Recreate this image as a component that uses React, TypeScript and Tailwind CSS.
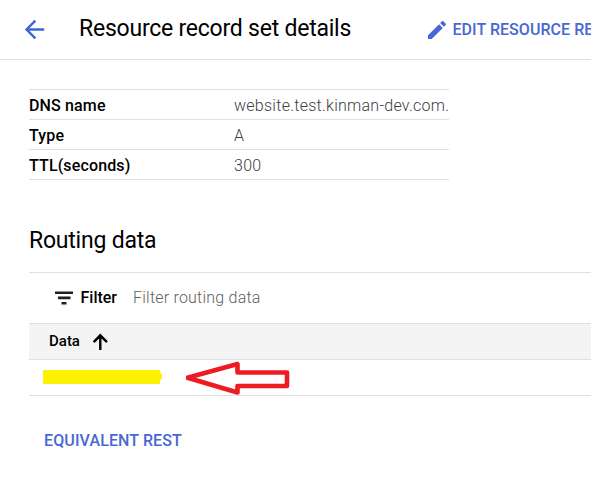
import React from "react";

const records = [
  { label: "DNS name", value: "website.test.kinman-dev.com." },
  { label: "Type", value: "A" },
  { label: "TTL(seconds)", value: "300" },
];

function Header() {
  return (
    <header className="flex h-[60px] items-center border-b border-[#dfdfdf] pl-5 whitespace-nowrap">
      <svg className="size-[29px] shrink-0 fill-[#4065d4]" viewBox="0 0 24 24">
        <path d="M20 11H7.83l5.59-5.59L12 4l-8 8 8 8 1.41-1.41L7.83 13H20v-2z" />
      </svg>
      <h1 className="ml-[30px] w-[346px] shrink-0 pb-px text-[23px] leading-7 tracking-[-0.23px]">Resource record set details</h1>
      <button className="flex shrink-0 items-center text-base font-medium text-[#4768d3]">
        <svg className="size-6 fill-current" viewBox="0 0 24 24">
          <path d="M3 17.25V21h3.75L17.81 9.94l-3.75-3.75L3 17.25zM20.71 7.04a.996.996 0 0 0 0-1.41l-2.34-2.34a.996.996 0 0 0-1.41 0l-1.83 1.83 3.75 3.75 1.83-1.83z" />
        </svg>
        <span className="ml-[3.5px] tracking-[0.05px]">EDIT RESOURCE RECORD SET</span>
      </button>
    </header>
  );
}

export default function App() {
  return (
    <div className="h-[502px] w-[591px] overflow-hidden bg-white font-['Roboto',sans-serif] text-black">
      <Header />
      <main className="pl-[29px]">
        <dl className="mt-[29px] w-[420px] border-t border-[#dfdfdf] text-base">
          {records.map((r) => (
            <div key={r.label} className="flex h-[30px] items-center border-b border-[#dfdfdf] pt-[3px] whitespace-nowrap">
              <dt className="w-[205px] shrink-0 font-medium tracking-[0.14px]">{r.label}</dt>
              <dd className="font-light tracking-[0.26px] text-[#404040]">{r.value}</dd>
            </div>
          ))}
        </dl>
        <h2 className="mt-[47px] text-[23px] leading-7 tracking-[-0.22px]">Routing data</h2>
        <section className="mt-[17px] border-t border-[#dfdfdf]">
          <div className="flex h-[50px] items-center pl-[23px]">
            <svg className="size-6 fill-[#202124]" viewBox="0 0 24 24">
              <path d="M9.5 18.5h5v-2.6h-5zM3 5.4V8h18V5.4zM6 13.2h12.5v-2.6H6z" />
            </svg>
            <span className="ml-[4.5px] font-medium">Filter</span>
            <span className="ml-4 font-light tracking-[0.22px] text-[#606060]">Filter routing data</span>
          </div>
          <div className="flex h-[37px] items-center border-y border-[#dfdfdf] bg-[#f4f4f4] pl-5">
            <span className="text-[15px] font-medium">Data</span>
            <svg className="ml-2 size-6 fill-black" viewBox="0 0 24 24">
              <path d="m4.8 11.2 1.7 1.7 4.6-4.4v11.5h2.4V8.5l4.7 4.4 1.6-1.7L12.3 3.5z" />
            </svg>
          </div>
          <div className="flex h-9 items-center border-b border-[#dfdfdf] pl-3.5">
            <svg className="mb-0.5 h-[14px] w-[119px] fill-[#fff200]" viewBox="0 0 119 14">
              <path d="M0 0h117v3h1v1h1v5h-1v1h-1v4H0z" />
            </svg>
            <svg className="ml-6 h-[34px] w-[106px] fill-none stroke-[#ed1c24]" viewBox="0 0 106 34">
              <path d="M1.5 16.7 51.5 3v8.5h49.5v13.5H51.5v6.5z" strokeWidth="4.6" strokeLinejoin="round" />
            </svg>
          </div>
        </section>
        <button className="mt-[33px] ml-[15px] text-base font-medium tracking-[0.12px] text-[#4768d3]">EQUIVALENT REST</button>
      </main>
    </div>
  );
}
